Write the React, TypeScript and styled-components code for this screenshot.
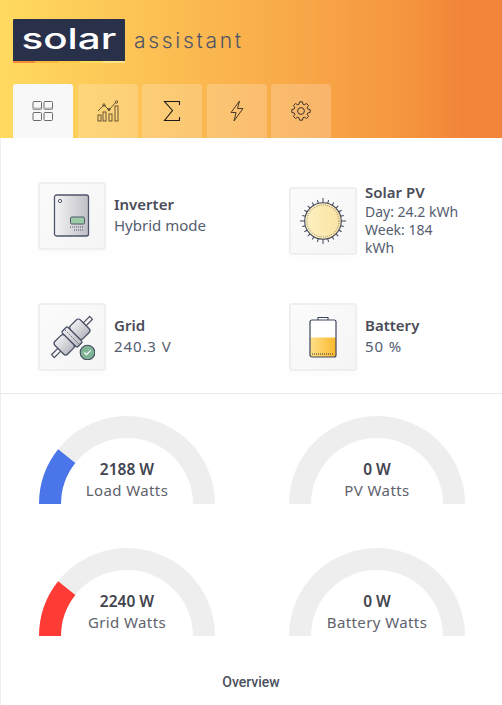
import React, { FC } from 'react'
import styled, { createGlobalStyle } from 'styled-components'

const GlobalStyle = createGlobalStyle`
  html, body {
    margin: 0;
    padding: 0;
    background: #fff;
  }
  * {
    box-sizing: border-box;
  }
`

const Page = styled.div`
  width: 502px;
  height: 705px;
  overflow: hidden;
  font-family: 'Noto Sans', sans-serif;
`
const Header = styled.header`
  height: 138px;
  padding: 19px 0 0 13px;
  background: linear-gradient(90deg, #ffda60 0%, #fab04c 50%, #f5963f 80%, #f28539 92%);
`
const LogoRow = styled.div`
  display: flex;
  align-items: flex-start;
  height: 65px;
`
const LogoBox = styled.div`
  width: 112px;
  height: 44px;
  background: #29304a;
  border-radius: 1px 1px 0 0;
  position: relative;
  display: flex;
  justify-content: center;
`
const LogoText = styled.span`
  display: block;
  color: #fff;
  font-family: Inter, sans-serif;
  font-size: 28px;
  font-weight: 500;
  line-height: 41px;
  transform: scaleX(1.44);
`
const LogoStripe = styled.div`
  position: absolute;
  left: 0;
  right: 0;
  bottom: 0;
  height: 2px;
  display: flex;
`
const StripePart = styled.span<{ $c: string }>`
  flex: 1;
  background: ${(p) => p.$c};
`
const LogoWord = styled.div`
  margin-left: 9px;
  color: #4e5468;
  font-family: Inter, sans-serif;
  font-size: 21px;
  font-weight: 300;
  line-height: 44px;
  letter-spacing: 2.7px;
`
const Tabs = styled.nav`
  display: flex;
  gap: 4.6px;
`
const Tab = styled.div<{ $active?: boolean }>`
  width: 60px;
  height: 54px;
  border-radius: 3px 3px 0 0;
  display: flex;
  align-items: center;
  justify-content: center;
  background: ${(p) => (p.$active ? '#f8f8f8' : 'rgba(255, 255, 255, 0.2)')};
`
const Content = styled.main`
  border-left: 1px solid #eee;
  height: 567px;
`
const StatusGrid = styled.section`
  display: grid;
  grid-template-columns: 251px 1fr;
  grid-template-rows: 76px 68px;
  row-gap: 45px;
  align-items: start;
  padding: 44px 0 22px 37px;
  border-bottom: 1px solid #e8e8e8;
`
const Status = styled.div`
  display: flex;
  align-items: center;
  gap: 8px;
`
const IconBox = styled.div`
  width: 68px;
  height: 68px;
  flex: none;
  display: flex;
  align-items: center;
  justify-content: center;
  background: linear-gradient(135deg, #fbfbfb, #f5f5f6);
  border: 2px solid #efefef;
  border-radius: 3px;
  box-shadow: 0 4px 10px rgba(0, 0, 0, 0.02);
`
const StatusText = styled.div`
  width: 98px;
  padding-bottom: 2px;
`
const Title = styled.div`
  color: #4a4c58;
  font-size: 15px;
  font-weight: 600;
  line-height: 21px;
`
const Value = styled.div<{ $spaced?: boolean }>`
  color: #555d6f;
  font-size: 15px;
  line-height: 21px;
  white-space: nowrap;
  letter-spacing: ${(p) => (p.$spaced ? '0.9px' : '0')};
`
const SmallValue = styled.div`
  color: #555d6f;
  font-size: 14px;
  line-height: 18px;
`
const GaugeGrid = styled.section`
  display: grid;
  grid-template-columns: 176px 176px;
  column-gap: 74px;
  row-gap: 44px;
  padding: 22px 0 0 38px;
`
const GaugeWrap = styled.div`
  position: relative;
  width: 176px;
  height: 88px;
`
const GaugeText = styled.div`
  position: absolute;
  left: 0;
  right: 0;
  top: 43px;
  text-align: center;
`
const GaugeValue = styled.div`
  color: #42444f;
  font-size: 15.5px;
  font-weight: 600;
  line-height: 20px;
`
const GaugeLabel = styled.div`
  color: #60626c;
  font-size: 15px;
  line-height: 23px;
  letter-spacing: 0.4px;
`
const Footer = styled.footer`
  margin-top: 35px;
  margin-left: -1px;
  text-align: center;
  color: #4b4f5c;
  font-family: Roboto, sans-serif;
  font-size: 14px;
  font-weight: 500;
  line-height: 22px;
`

const arc = (angle: number) => {
  const a = (angle * Math.PI) / 180
  const ox = 88 - 88 * Math.cos(a)
  const oy = 88 - 88 * Math.sin(a)
  const ix = 88 - 66 * Math.cos(a)
  const iy = 88 - 66 * Math.sin(a)
  return `M0 88A88 88 0 0 1 ${ox} ${oy}L${ix} ${iy}A66 66 0 0 0 22 88Z`
}

const Gauge: FC<{ value: string; label: string; angle?: number; color?: string }> = ({ value, label, angle, color }) => (
  <GaugeWrap>
    <svg width="176" height="88" viewBox="0 0 176 88">
      <path d="M0 88A88 88 0 0 1 176 88H154A66 66 0 0 0 22 88Z" fill="#eeeeee" />
      {angle ? <path d={arc(angle)} fill={color} /> : null}
    </svg>
    <GaugeText>
      <GaugeValue>{value}</GaugeValue>
      <GaugeLabel>{label}</GaugeLabel>
    </GaugeText>
  </GaugeWrap>
)

const DashIcon = () => (
  <svg width="22" height="22" viewBox="0 0 22 22" fill="none" stroke="#6a6a6a" strokeWidth="1">
    <rect x="1" y="1.5" width="8.5" height="8" rx="1" />
    <rect x="12" y="1.5" width="8.5" height="8" rx="1" />
    <path d="M1.5 8.5H9M12.5 8.5H20" stroke="#bbb" strokeWidth="2" />
    <rect x="1" y="12.5" width="8.5" height="8" rx="1" />
    <rect x="12" y="12.5" width="8.5" height="8" rx="1" />
  </svg>
)
const ChartIcon = () => (
  <svg width="22" height="22" viewBox="0 0 22 22" fill="none" stroke="#5b4a30" strokeWidth="0.9">
    <rect x="1" y="15" width="3" height="6" />
    <rect x="6" y="12" width="3" height="9" />
    <rect x="12" y="14" width="3" height="7" />
    <rect x="18" y="6" width="3" height="15" />
    <path d="M1 11L7 5L12 10L19 2" />
    <circle cx="7" cy="5" r="1.2" />
    <circle cx="12" cy="9.5" r="1.2" />
    <circle cx="19.5" cy="2" r="1.2" />
  </svg>
)
const SigmaIcon = () => (
  <svg width="18" height="22" viewBox="0 0 18 22" fill="none" stroke="#1c1a18" strokeWidth="1.1">
    <path d="M16.5 5V1.5H1.5L9.5 10.5L1.5 20.5H16.5V17" />
  </svg>
)
const BoltIcon = () => (
  <svg width="16" height="22" viewBox="0 0 16 22" fill="none" stroke="#4a3a28" strokeWidth="1" strokeLinejoin="round">
    <path d="M10.5 1L2 12.5H7L5 21L14 8.5H8.5Z" />
  </svg>
)

const gearPath = () => {
  const pts: string[] = []
  for (let i = 0; i < 8; i++) {
    const mid = (i * Math.PI) / 4 - Math.PI / 2
    const spots: [number, number][] = [
      [7, -0.3],
      [9.3, -0.15],
      [9.3, 0.15],
      [7, 0.3],
    ]
    spots.forEach(([r, off]) => {
      pts.push(`${(r * Math.cos(mid + off)).toFixed(2)} ${(r * Math.sin(mid + off)).toFixed(2)}`)
    })
  }
  return `M${pts.join('L')}Z`
}

const GearIcon = () => (
  <svg width="20" height="20" viewBox="-10 -10 20 20" fill="none" stroke="#3e3428" strokeWidth="1" strokeLinejoin="round">
    <path d={gearPath()} />
    <circle r="3.4" />
  </svg>
)

const InverterIcon = () => (
  <svg width="38" height="44" viewBox="0 0 38 44">
    <defs>
      <linearGradient id="inv" x1="0" x2="1">
        <stop offset="0" stopColor="#f4f4f5" />
        <stop offset="1" stopColor="#bfc0c6" />
      </linearGradient>
    </defs>
    <rect x="1.5" y="1" width="34" height="41" rx="2" fill="url(#inv)" stroke="#4f566b" strokeWidth="1.3" />
    <circle cx="7" cy="7" r="1.6" fill="#fff" stroke="#4f566b" />
    <rect x="17.5" y="23" width="14" height="7" rx="1.2" fill="#9ccba8" stroke="#4f566b" />
    <path d="M17 33H31M21 36H31" stroke="#4f566b" strokeWidth="1" strokeDasharray="1 1" />
  </svg>
)

const SunIcon = () => {
  const rays = Array.from({ length: 24 }, (_, i) => (i * 360) / 24)
  return (
    <svg width="46" height="46" viewBox="-23 -23 46 46">
      <defs>
        <linearGradient id="sun" x1="0" x2="1">
          <stop offset="0" stopColor="#fdf0c0" />
          <stop offset="1" stopColor="#fbe2a2" />
        </linearGradient>
      </defs>
      {rays.map((r) => (
        <line key={r} x1="0" y1="-18" x2="0" y2={r % 90 === 0 ? -23 : -21.5} stroke="#3f465c" strokeWidth="1" transform={`rotate(${r})`} />
      ))}
      <circle r="18.3" fill="url(#sun)" stroke="#3f465c" strokeWidth="1.1" />
      <circle r="16" fill="none" stroke="#5a5f70" strokeWidth="0.7" strokeDasharray="1 1.2" />
    </svg>
  )
}

const PlugIcon = () => (
  <svg width="46" height="46" viewBox="0 0 46 46">
    <defs>
      <linearGradient id="plug" x1="0" x2="1">
        <stop offset="0" stopColor="#eeeef0" />
        <stop offset="1" stopColor="#b9bac1" />
      </linearGradient>
    </defs>
    <g transform="rotate(45 23 23)" stroke="#454b60" strokeWidth="1.2" fill="url(#plug)" strokeLinejoin="round">
      <rect x="21" y="-4" width="4" height="10" fill="#f5f5f6" />
      <rect x="21" y="40" width="4" height="10" fill="#f5f5f6" />
      <rect x="14" y="5" width="18" height="14" rx="3" />
      <rect x="14" y="27" width="18" height="14" rx="3" />
      <rect x="12" y="19" width="22" height="8" rx="1.5" />
      <path d="M13 23H33" strokeDasharray="1.5 1.5" strokeWidth="0.8" />
    </g>
    <circle cx="38.5" cy="38.5" r="7.3" fill="#7fb596" stroke="#454b60" strokeWidth="1.1" />
    <path d="M35.3 38.5L37.5 40.7L41.7 36.3" fill="none" stroke="#fff" strokeWidth="1.2" />
  </svg>
)

const BatteryIcon = () => (
  <svg width="28" height="42" viewBox="0 0 28 42">
    <defs>
      <linearGradient id="bat" x1="0" x2="1">
        <stop offset="0" stopColor="#fde08a" />
        <stop offset="1" stopColor="#fbb92c" />
      </linearGradient>
    </defs>
    <path d="M9 4V1.5H19V4" fill="#fff" stroke="#3f465c" strokeWidth="1.1" />
    <rect x="1" y="4" width="26" height="37" rx="2" fill="#fff" />
    <path d="M1 21.5H27V39A2 2 0 0 1 25 41H3A2 2 0 0 1 1 39Z" fill="url(#bat)" />
    <rect x="1" y="4" width="26" height="37" rx="2" fill="none" stroke="#3f465c" strokeWidth="1.2" />
    <path d="M3 38H25" stroke="#333" strokeWidth="1" strokeDasharray="1 1" />
  </svg>
)

const App: FC = () => (
  <Page>
    <GlobalStyle />
    <Header>
      <LogoRow>
        <LogoBox>
          <LogoText>solar</LogoText>
          <LogoStripe>
            <StripePart $c="#f58a37" />
            <StripePart $c="#f8b83c" />
            <StripePart $c="#fbc945" />
            <StripePart $c="#fddb58" />
            <StripePart $c="#fde487" />
          </LogoStripe>
        </LogoBox>
        <LogoWord>assistant</LogoWord>
      </LogoRow>
      <Tabs>
        <Tab $active>
          <DashIcon />
        </Tab>
        <Tab>
          <ChartIcon />
        </Tab>
        <Tab>
          <SigmaIcon />
        </Tab>
        <Tab>
          <BoltIcon />
        </Tab>
        <Tab>
          <GearIcon />
        </Tab>
      </Tabs>
    </Header>
    <Content>
      <StatusGrid>
        <Status>
          <IconBox>
            <InverterIcon />
          </IconBox>
          <StatusText>
            <Title>Inverter</Title>
            <Value>Hybrid mode</Value>
          </StatusText>
        </Status>
        <Status>
          <IconBox>
            <SunIcon />
          </IconBox>
          <StatusText>
            <Title>Solar PV</Title>
            <SmallValue>Day: 24.2 kWh</SmallValue>
            <SmallValue>Week: 184 kWh</SmallValue>
          </StatusText>
        </Status>
        <Status>
          <IconBox>
            <PlugIcon />
          </IconBox>
          <StatusText>
            <Title>Grid</Title>
            <Value $spaced>240.3 V</Value>
          </StatusText>
        </Status>
        <Status>
          <IconBox>
            <BatteryIcon />
          </IconBox>
          <StatusText>
            <Title>Battery</Title>
            <Value $spaced>50 %</Value>
          </StatusText>
        </Status>
      </StatusGrid>
      <GaugeGrid>
        <Gauge value="2188 W" label="Load Watts" angle={38.5} color="#4a76ea" />
        <Gauge value="0 W" label="PV Watts" />
        <Gauge value="2240 W" label="Grid Watts" angle={38.5} color="#ff3b35" />
        <Gauge value="0 W" label="Battery Watts" />
      </GaugeGrid>
      <Footer>Overview</Footer>
    </Content>
  </Page>
)

export default App
